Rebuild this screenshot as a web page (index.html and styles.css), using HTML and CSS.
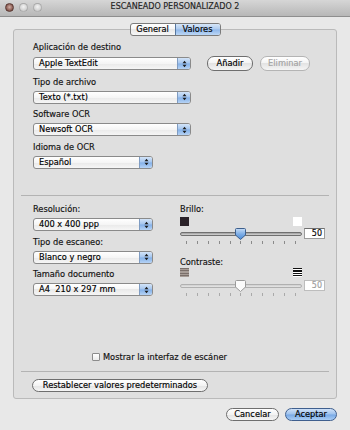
FILE: index.html
```html
<!DOCTYPE html>
<html lang="es">
<head>
    <meta charset="UTF-8">
    <meta name="viewport" content="width=device-width, initial-scale=1.0">
    <title>ESCANEADO PERSONALIZADO 2</title>
    <link rel="stylesheet" href="styles.css">
</head>
<body>
    <div class="titlebar">
        <div class="lights">
            <span class="light close"></span>
            <span class="light"></span>
            <span class="light"></span>
        </div>
        <div class="title">ESCANEADO PERSONALIZADO 2</div>
        <div></div>
    </div>

    <div class="tabs">
        <div class="segmented">
            <span class="tab">General</span>
            <span class="tab active">Valores</span>
        </div>
    </div>

    <div class="group">
        <!-- destino / archivo / OCR -->
        <div class="section output">
            <div class="field">
                <div class="label">Aplicación de destino</div>
                <div class="row">
                    <div class="popup wide"><span class="value">Apple TextEdit</span><span class="arrows"><svg width="5" height="8" viewBox="0 0 5 8"><path d="M0.5 3.2 L2.5 0.8 L4.5 3.2 Z M0.5 4.8 L2.5 7.2 L4.5 4.8 Z" fill="#1d1d1d"/></svg></span></div>
                    <button class="btn add">Añadir</button>
                    <button class="btn remove disabled">Eliminar</button>
                </div>
            </div>
            <div class="field">
                <div class="label">Tipo de archivo</div>
                <div class="popup wide"><span class="value">Texto (*.txt)</span><span class="arrows"><svg width="5" height="8" viewBox="0 0 5 8"><path d="M0.5 3.2 L2.5 0.8 L4.5 3.2 Z M0.5 4.8 L2.5 7.2 L4.5 4.8 Z" fill="#1d1d1d"/></svg></span></div>
            </div>
            <div class="field">
                <div class="label">Software OCR</div>
                <div class="popup wide"><span class="value">Newsoft OCR</span><span class="arrows"><svg width="5" height="8" viewBox="0 0 5 8"><path d="M0.5 3.2 L2.5 0.8 L4.5 3.2 Z M0.5 4.8 L2.5 7.2 L4.5 4.8 Z" fill="#1d1d1d"/></svg></span></div>
            </div>
            <div class="field">
                <div class="label">Idioma de OCR</div>
                <div class="popup"><span class="value">Español</span><span class="arrows"><svg width="5" height="8" viewBox="0 0 5 8"><path d="M0.5 3.2 L2.5 0.8 L4.5 3.2 Z M0.5 4.8 L2.5 7.2 L4.5 4.8 Z" fill="#1d1d1d"/></svg></span></div>
            </div>
        </div>

        <div class="sep"></div>

        <!-- escaneo -->
        <div class="section scan">
            <div class="col left">
                <div class="field">
                    <div class="label">Resolución:</div>
                    <div class="popup"><span class="value">400 x 400 ppp</span><span class="arrows"><svg width="5" height="8" viewBox="0 0 5 8"><path d="M0.5 3.2 L2.5 0.8 L4.5 3.2 Z M0.5 4.8 L2.5 7.2 L4.5 4.8 Z" fill="#1d1d1d"/></svg></span></div>
                </div>
                <div class="field">
                    <div class="label">Tipo de escaneo:</div>
                    <div class="popup"><span class="value">Blanco y negro</span><span class="arrows"><svg width="5" height="8" viewBox="0 0 5 8"><path d="M0.5 3.2 L2.5 0.8 L4.5 3.2 Z M0.5 4.8 L2.5 7.2 L4.5 4.8 Z" fill="#1d1d1d"/></svg></span></div>
                </div>
                <div class="field">
                    <div class="label">Tamaño documento</div>
                    <div class="popup"><span class="value">A4&nbsp;&nbsp;210 x 297 mm</span><span class="arrows"><svg width="5" height="8" viewBox="0 0 5 8"><path d="M0.5 3.2 L2.5 0.8 L4.5 3.2 Z M0.5 4.8 L2.5 7.2 L4.5 4.8 Z" fill="#1d1d1d"/></svg></span></div>
                </div>
            </div>

            <div class="col right">
                <div class="label">Brillo:</div>
                <div class="icons">
                    <span class="swatch dark"></span>
                    <span class="swatch light-sq"></span>
                </div>
                <div class="slider-row">
                    <div class="track-wrap">
                        <div class="track"></div>
                        <svg class="thumb" width="11" height="12" viewBox="0 0 11 12">
                            <defs>
                                <linearGradient id="blueThumb" x1="0" y1="0" x2="0" y2="1">
                                    <stop offset="0" stop-color="#c6dcf6"/>
                                    <stop offset="0.5" stop-color="#7eaee6"/>
                                    <stop offset="1" stop-color="#4b8bd8"/>
                                </linearGradient>
                            </defs>
                            <path d="M1.5 0.5 H9.5 Q10.5 0.5 10.5 1.5 V7 L5.5 11.5 L0.5 7 V1.5 Q0.5 0.5 1.5 0.5 Z" fill="url(#blueThumb)" stroke="#3d5f8c"/>
                        </svg>
                    </div>
                    <div class="num">50</div>
                </div>
                <div class="ticks">
                    <span></span><span></span><span></span><span></span><span></span><span></span><span></span><span></span><span></span><span></span><span></span>
                </div>

                <div class="label contrast">Contraste:</div>
                <div class="icons">
                    <span class="swatch stripes-low"></span>
                    <span class="swatch stripes-high"></span>
                </div>
                <div class="slider-row">
                    <div class="track-wrap">
                        <div class="track disabled"></div>
                        <svg class="thumb" width="11" height="12" viewBox="0 0 11 12">
                            <path d="M1.5 0.5 H9.5 Q10.5 0.5 10.5 1.5 V7 L5.5 11.5 L0.5 7 V1.5 Q0.5 0.5 1.5 0.5 Z" fill="#fbfbfb" stroke="#9a9a9a"/>
                        </svg>
                    </div>
                    <div class="num disabled">50</div>
                </div>
                <div class="ticks faint">
                    <span></span><span></span><span></span><span></span><span></span><span></span><span></span><span></span><span></span><span></span><span></span>
                </div>
            </div>
        </div>

        <div class="check-row">
            <span class="checkbox"></span>
            <span>Mostrar la interfaz de escáner</span>
        </div>

        <div class="sep"></div>

        <div class="reset-row">
            <button class="btn reset">Restablecer valores predeterminados</button>
        </div>
    </div>

    <div class="footer">
        <button class="btn cancel">Cancelar</button>
        <button class="btn default">Aceptar</button>
    </div>
</body>
</html>
```

FILE: styles.css
```css
body {
    margin: 0;
    width: 350px;
    height: 430px;
    overflow: hidden;
    background-color: #e8e8e8;
    font-family: "DejaVu Sans", "Lucida Grande", sans-serif;
    font-size: 8.25px;
    line-height: 10px;
    color: #111;
    -webkit-text-stroke: 0.15px currentColor;
}

/* barra de titulo */
.titlebar {
    display: grid;
    grid-template-columns: 1fr auto 1fr;
    align-items: center;
    height: 14px;
    padding-bottom: 2px;
    border-bottom: 1px solid #8e8e8e;
    background: linear-gradient(#d6d6d6, #b7b7b7);
}

.lights {
    display: flex;
    gap: 5px;
    padding-left: 5px;
}

.light {
    width: 9px;
    height: 9px;
    box-sizing: border-box;
    border-radius: 50%;
    border: 1px solid rgba(0, 0, 0, 0.18);
    background: radial-gradient(circle at 50% 40%, #f3f3f3, #d2d2d2 65%, #b8b8b8);
}

.light.close {
    border-color: #5a3a34;
    background: radial-gradient(circle at 50% 45%, #d3b0a8, #8e5f55 60%, #5e3c36);
}

.title {
    font-size: 8px;
    color: #222;
}

/* pestañas */
.tabs {
    position: relative;
    z-index: 1;
    display: flex;
    justify-content: center;
    margin-top: 6px;
}

.segmented {
    display: flex;
    height: 13px;
    box-sizing: border-box;
    border: 1px solid #7b7b7b;
    border-radius: 3px;
    overflow: hidden;
    background: linear-gradient(#ffffff, #f4f4f4 50%, #e8e8e8 50%, #f7f7f7);
}

.tab {
    width: 44px;
    text-align: center;
    line-height: 11px;
    color: #000;
}

.tab.active {
    border-left: 1px solid #56779f;
    background: linear-gradient(#d6e6f8, #acc9ee 48%, #8fb7ea 52%, #bcd7f6);
}

/* recuadro */
.group {
    margin: -7px 13px 0;
    border: 1px solid #bababa;
    border-radius: 3px;
    background-color: #dfdfdf;
}

.section.output {
    padding: 12px 19px 26.5px;
    display: flex;
    flex-direction: column;
    gap: 5.5px;
}

.label {
    color: #111;
    white-space: nowrap;
}

.field .label {
    margin-bottom: 4px;
}

.row {
    display: flex;
    align-items: center;
}

.popup {
    display: flex;
    width: 120px;
    height: 13px;
    box-sizing: border-box;
    border: 1px solid #8a8a8a;
    border-radius: 3px;
    overflow: hidden;
    background: linear-gradient(#ffffff, #f5f5f5 50%, #e9e9e9 50%, #f6f6f6);
}

.popup.wide {
    width: 158px;
}

.popup .value {
    flex: 1;
    padding-left: 5px;
    line-height: 11px;
    color: #000;
    white-space: nowrap;
}

.popup .arrows {
    display: flex;
    align-items: center;
    justify-content: center;
    width: 12px;
    border-left: 1px solid #7f9cc2;
    background: linear-gradient(#d3e4f8, #a4c5ee 48%, #83b0e8 52%, #b6d3f5);
}

.btn {
    height: 13px;
    box-sizing: border-box;
    padding: 0;
    border: 1px solid #6e6e6e;
    border-radius: 7px;
    background: linear-gradient(#ffffff, #f3f3f3 50%, #e3e3e3 50%, #f5f5f5);
    font-family: inherit;
    font-size: 8.25px;
    line-height: 11px;
    color: #000;
    text-align: center;
}

.btn.add {
    width: 46px;
    height: 15px;
    margin-left: 16px;
}

.btn.remove {
    width: 50px;
    height: 15px;
    margin-left: 7px;
}

.btn.disabled {
    border-color: #b4b4b4;
    color: #a4a4a4;
}

.sep {
    height: 1px;
    margin: 0 7px;
    background-color: #b3b3b3;
}

/* escaneo */
.section.scan {
    display: flex;
    gap: 27px;
    padding: 8px 0 0 19px;
}

.col.left {
    display: flex;
    flex-direction: column;
    gap: 5.5px;
    width: 120px;
}

.col.right {
    width: 145px;
}

.icons {
    display: flex;
    justify-content: space-between;
    width: 122px;
    margin-top: 3px;
}

.swatch {
    width: 9px;
    height: 9px;
}

.swatch.dark {
    background-color: #2a2228;
}

.swatch.light-sq {
    background-color: #fff;
}

.swatch.stripes-low {
    background: repeating-linear-gradient(#7a6f6a 0 1px, #a79d97 1px 2.25px);
}

.swatch.stripes-high {
    background: repeating-linear-gradient(#111 0 1.25px, #fff 1.25px 2.25px);
}

.slider-row {
    display: flex;
    align-items: center;
    margin-top: 2px;
}

.track-wrap {
    position: relative;
    width: 122px;
    height: 11px;
    display: flex;
    align-items: center;
}

.track {
    width: 100%;
    height: 4px;
    box-sizing: border-box;
    border: 1px solid #6f6f6f;
    border-radius: 2px;
    background: linear-gradient(#9c9c9c, #d6d6d6);
}

.track.disabled {
    border-color: #b0b0b0;
    background: linear-gradient(#cfcfcf, #e6e6e6);
}

.thumb {
    position: absolute;
    left: 55px;
    top: 0;
}

.num {
    width: 21px;
    height: 11px;
    margin-left: 2px;
    box-sizing: border-box;
    padding-right: 2px;
    border: 1px solid #9b9b9b;
    border-top-color: #6f6f6f;
    background-color: #fff;
    text-align: right;
    font-size: 8px;
    line-height: 9px;
    color: #000;
}

.num.disabled {
    border-color: #bdbdbd;
    color: #9c9c9c;
}

.ticks {
    display: flex;
    justify-content: space-between;
    width: 122px;
    box-sizing: border-box;
    padding: 0 6px;
    margin-top: 2px;
    height: 3px;
}

.ticks span {
    width: 1px;
    height: 3px;
    background-color: #8a8a8a;
}

.ticks.faint span {
    background-color: #a9a9a9;
}

.label.contrast {
    margin-top: 13px;
    margin-bottom: 1px;
}

.icons + .slider-row {
    margin-top: 2px;
}

.col.right .label.contrast + .icons {
    margin-top: 1px;
}

.col.right .label.contrast + .icons + .slider-row {
    margin-top: 3px;
}

/* casilla */
.check-row {
    display: flex;
    align-items: center;
    margin: 56px 0 9px;
    padding-left: 78px;
}

.checkbox {
    width: 8px;
    height: 8px;
    box-sizing: border-box;
    margin-right: 3px;
    border: 1px solid #8c8c8c;
    border-radius: 1px;
    background: linear-gradient(#ffffff, #ececec);
}

.reset-row {
    padding: 7px 18px 6px;
}

.btn.reset {
    width: 176px;
}

/* botones inferiores */
.footer {
    display: flex;
    justify-content: flex-end;
    gap: 6px;
    margin-top: 9px;
    padding-right: 13px;
}

.btn.cancel {
    width: 53px;
}

.btn.default {
    width: 52px;
    border-color: #3f5f8e;
    background: linear-gradient(#cfe1f8, #9ec2ee 48%, #78a9e6 52%, #a9cdf5);
}
```
